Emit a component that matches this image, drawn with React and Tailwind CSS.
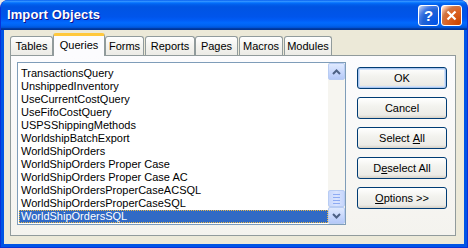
import React from 'react';

const items = [
  'TransactionsQuery',
  'UnshippedInventory',
  'UseCurrentCostQuery',
  'UseFifoCostQuery',
  'USPSShippingMethods',
  'WorldshipBatchExport',
  'WorldShipOrders',
  'WorldShipOrders Proper Case',
  'WorldShipOrders Proper Case AC',
  'WorldShipOrdersProperCaseACSQL',
  'WorldShipOrdersProperCaseSQL',
  'WorldShipOrdersSQL',
];

const tabs = [
  { label: 'Tables', w: 'w-[43px]', ml: 'ml-0' },
  { label: 'Queries', w: 'w-[52px]', ml: 'ml-0', active: true },
  { label: 'Forms', w: 'w-[39px]', ml: 'ml-0' },
  { label: 'Reports', w: 'w-[50px]', ml: 'ml-[1px]' },
  { label: 'Pages', w: 'w-[43px]', ml: 'ml-0' },
  { label: 'Macros', w: 'w-[44px]', ml: 'ml-[1px]' },
  { label: 'Modules', w: 'w-[48px]', ml: 'ml-[1px]' },
];

const XpButton = ({ children, isDefault }) => (
  <div
    className={`h-[22px] w-[90px] flex items-center justify-center rounded-[3px] border border-[#003C74] bg-[linear-gradient(180deg,#FFFFFF_0%,#F3F3EF_40%,#ECEBE6_85%,#D6D0C5_100%)] text-[11px] text-black ${
      isDefault ? 'shadow-[inset_0_0_0_1px_#A8C4EE,inset_0_0_0_2px_#CFE0F8]' : ''
    }`}
  >
    {children}
  </div>
);

const ScrollBtn = ({ up }) => (
  <div className="h-[17px] w-[17px] rounded-[2px] border border-[#B8CCF3] bg-[linear-gradient(180deg,#E0EAFE_0%,#C6D6FC_60%,#B5C9F8_100%)] flex items-center justify-center">
    <svg width="9" height="6" viewBox="0 0 9 6">
      <path
        d={up ? 'M1 5 L4.5 1.5 L8 5' : 'M1 1 L4.5 4.5 L8 1'}
        fill="none"
        stroke="#4D6185"
        strokeWidth="2"
      />
    </svg>
  </div>
);

export default function App() {
  return (
    <div className="w-[468px] h-[248px] bg-[#E8E8E8] font-['Liberation_Sans',Arial,sans-serif]">
      <div className="w-full h-full flex flex-col rounded-t-[8px] overflow-hidden bg-[#0055E5] border-x border-b border-[#0831D9]">
        {/* title bar */}
        <div className="h-[30px] shrink-0 flex items-center pl-[6px] pr-[5px] bg-[linear-gradient(to_bottom,#0058EE_0%,#3593FF_4%,#288EFF_6%,#127DFF_8%,#036FFC_10%,#0262EE_14%,#0057E5_20%,#0054E3_24%,#0055EB_56%,#005BF5_66%,#026AFE_76%,#0062EF_86%,#0052D6_92%,#0040AB_94%,#003092_100%)]">
          <span className="text-white font-bold text-[13px] tracking-[0.1px] [text-shadow:1px_1px_#0F1089]">
            Import Objects
          </span>
          <div className="ml-auto flex gap-[2px]">
            <div className="w-[21px] h-[21px] rounded-[3px] border border-white bg-[radial-gradient(circle_at_90%_90%,#0054E9_0%,#2263D5_55%,#4479E4_70%,#A3BBEC_90%,#FFFFFF_100%)] flex items-center justify-center">
              <span className="text-white font-bold text-[15px] leading-none">?</span>
            </div>
            <div className="w-[21px] h-[21px] rounded-[3px] border border-white bg-[radial-gradient(circle_at_90%_90%,#CC4600_0%,#DC6527_55%,#CD7546_70%,#FFCCB2_90%,#FFFFFF_100%)] flex items-center justify-center">
              <svg width="11" height="11" viewBox="0 0 11 11">
                <path d="M1.5 1.5 L9.5 9.5 M9.5 1.5 L1.5 9.5" stroke="#FFFFFF" strokeWidth="2.2" />
              </svg>
            </div>
          </div>
        </div>

        {/* body */}
        <div className="flex-1 mx-[3px] mb-[3px] bg-[#ECE9D8] flex flex-col pt-[3px] pl-[6px] pr-[8px] pb-[8px] text-[11px]">
          <div className="h-[22px] flex items-end relative z-10">
            {tabs.map((t) =>
              t.active ? (
                <div
                  key={t.label}
                  className={`${t.w} ${t.ml} h-[23px] -mb-px flex items-center justify-center rounded-t-[3px] border-x border-[#919B9C] border-t-[3px] border-t-[#FFC83C] bg-[#FCFCFE] text-black pb-[2px]`}
                >
                  {t.label}
                </div>
              ) : (
                <div
                  key={t.label}
                  className={`${t.w} ${t.ml} h-[19px] flex items-center justify-center rounded-t-[3px] border-x border-t border-[#919B9C] bg-[linear-gradient(180deg,#FFFFFF_0%,#F3F3EF_50%,#ECEBE6_100%)] text-black`}
                >
                  {t.label}
                </div>
              )
            )}
          </div>

          {/* tab panel */}
          <div className="flex-1 border border-[#919B9C] bg-[linear-gradient(180deg,#FCFCFE_0%,#F4F3EE_100%)] flex pt-[6px] pl-[6px]">
            {/* list box */}
            <div className="w-[329px] h-[163px] border border-[#7F9DB9] bg-white flex">
              <div className="flex-1 flex flex-col justify-end overflow-hidden pb-[1px] pl-[1px]">
                {items.map((it, i) =>
                  i === items.length - 1 ? (
                    <div
                      key={it}
                      className="h-[13px] leading-[11px] pl-[1px] bg-[#316AC5] text-white border border-dotted border-[#E8B848] whitespace-nowrap"
                    >
                      {it}
                    </div>
                  ) : (
                    <div key={it} className="h-[13px] leading-[13px] pl-[2px] text-black whitespace-nowrap">
                      {it}
                    </div>
                  )
                )}
              </div>
              <div className="w-[17px] flex flex-col bg-[#F6F5F0]">
                <ScrollBtn up />
                <div className="flex-1" />
                <div className="h-[17px] w-[17px] rounded-[2px] border border-[#B8CCF3] bg-[linear-gradient(90deg,#C9D8FC_0%,#DAE4FE_50%,#C6D6FC_100%)] flex flex-col items-center justify-center gap-[2px]">
                  <div className="w-[7px] h-px bg-[#8EABF3]" />
                  <div className="w-[7px] h-px bg-[#8EABF3]" />
                  <div className="w-[7px] h-px bg-[#8EABF3]" />
                  <div className="w-[7px] h-px bg-[#8EABF3]" />
                </div>
                <ScrollBtn />
              </div>
            </div>

            {/* buttons */}
            <div className="ml-[11px] pt-[5px] flex flex-col gap-[8px]">
              <XpButton isDefault>OK</XpButton>
              <XpButton>Cancel</XpButton>
              <XpButton>
                Select&nbsp;<span className="underline">A</span>ll
              </XpButton>
              <XpButton>
                D<span className="underline">e</span>select All
              </XpButton>
              <XpButton>
                <span className="underline">O</span>ptions &gt;&gt;
              </XpButton>
            </div>
          </div>
        </div>
      </div>
    </div>
  );
}
